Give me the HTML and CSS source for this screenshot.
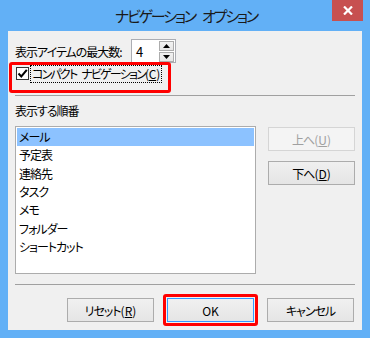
FILE: index.html
```html
<!DOCTYPE html>
<html lang="ja">
<head>
<meta charset="utf-8">
<link rel="stylesheet" href="styles.css">
</head>
<body>
<div class="window">
  <div class="titlebar">
    <span class="title">ナビゲーション オプション</span>
    <div class="close">
      <svg width="10" height="9" viewBox="0 0 10 9"><path d="M1 0.5 L9 8.5 M9 0.5 L1 8.5" stroke="#fff" stroke-width="2.2"/></svg>
    </div>
  </div>
  <div class="client">
    <div class="row-max">
      <span class="max-label">表示アイテムの最大数<span class="en">:</span></span>
      <div class="spin">
        <span class="spin-val">4</span>
        <div class="spin-btns">
          <div class="sb"><svg width="7" height="4" viewBox="0 0 7 4"><path d="M3.5 0 L7 4 L0 4Z" fill="#000"/></svg></div>
          <div class="sb"><svg width="7" height="4" viewBox="0 0 7 4"><path d="M0 0 L7 0 L3.5 4Z" fill="#000"/></svg></div>
        </div>
      </div>
    </div>
    <div class="row-check">
      <span class="chk"><svg width="11" height="11" viewBox="0 0 11 11"><path d="M1.5 5.5 L4.3 8.5 L9.8 1.8" fill="none" stroke="#000" stroke-width="2"/></svg></span>
      <span class="chk-label">コンパクト ナビゲーション<span class="en">(<u>C</u>)</span></span>
    </div>
    <div class="sep"></div>
    <div class="lbl">表示する順番</div>
    <div class="list-row">
      <div class="list">
        <div class="item sel">メール</div>
        <div class="item">予定表</div>
        <div class="item">連絡先</div>
        <div class="item">タスク</div>
        <div class="item">メモ</div>
        <div class="item">フォルダー</div>
        <div class="item">ショートカット</div>
      </div>
      <div class="side-btns">
        <div class="btn disabled">上へ<span class="en">(<u>U</u>)</span></div>
        <div class="btn">下へ<span class="en">(<u>D</u>)</span></div>
      </div>
    </div>
    <div class="sep sep2"></div>
    <div class="bottom-btns">
      <div class="btn">リセット<span class="en">(<u>R</u>)</span></div>
      <div class="btn default"><span class="en">OK</span></div>
      <div class="btn">キャンセル</div>
    </div>
  </div>
</div>
</body>
</html>
```

FILE: styles.css
```css
* { box-sizing: border-box; }
html, body { margin: 0; padding: 0; }
body {
  width: 370px;
  height: 338px;
  overflow: hidden;
  font-family: "Noto Sans CJK JP", "Noto Sans", sans-serif;
  font-feature-settings: "palt";
  font-size: 12px;
  letter-spacing: -1px;
  color: #000;
}
.en { letter-spacing: 0; }
.window {
  width: 370px;
  height: 338px;
  background: #62b0f6;
  display: flex;
  flex-direction: column;
  padding: 0 8px 8px 8px;
}
.titlebar {
  position: relative;
  height: 31px;
  display: flex;
  align-items: center;
  justify-content: center;
}
.title {
  font-size: 15px;
  letter-spacing: -2.2px;
  word-spacing: 6px;
  color: #1a1a1a;
  margin-top: -1px;
  margin-left: 2px;
}
.close {
  position: absolute;
  top: 0;
  right: -1px;
  width: 31px;
  height: 21px;
  background: #c75050;
  display: flex;
  align-items: center;
  justify-content: center;
}
.client {
  position: relative;
  flex: 1;
  background: #f0f0f0;
  padding: 8px 7px 0 7px;
}
.row-max {
  display: flex;
  align-items: center;
  height: 24px;
}
.max-label {
  width: 116px;
  flex-shrink: 0;
  white-space: nowrap;
}
.spin {
  width: 45px;
  height: 24px;
  border: 1px solid #abadb3;
  background: #fff;
  display: flex;
  align-items: center;
  justify-content: space-between;
  padding: 0 1px 0 4px;
}
.spin-val { font-size: 13px; }
.spin-btns {
  display: flex;
  flex-direction: column;
  gap: 1px;
}
.sb {
  width: 15px;
  height: 10px;
  border: 1px solid #acacac;
  background: linear-gradient(#f2f2f2, #e6e6e6);
  display: flex;
  align-items: center;
  justify-content: center;
}
.row-check {
  position: relative;
  display: flex;
  align-items: center;
  height: 21px;
}
.row-check::after {
  content: "";
  position: absolute;
  left: -6px;
  top: -1px;
  width: 156px;
  height: 25px;
  border: 3px solid #f00;
  border-radius: 3px;
}
.chk {
  width: 13px;
  height: 13px;
  border: 1px solid #333;
  background: #fff;
  display: flex;
  align-items: center;
  justify-content: center;
  margin-left: 1px;
  flex-shrink: 0;
}
.chk-label {
  margin-left: 1px;
  border: 1px dotted #000;
  padding: 0 1px;
  line-height: 16px;
  white-space: nowrap;
  letter-spacing: -1.8px;
  word-spacing: 4px;
}
.chk-label .en { letter-spacing: -0.3px; }
.sep {
  height: 1px;
  background: #a0a0a0;
  width: 340px;
  margin-top: 11px;
}
.lbl {
  margin-top: 7px;
  line-height: 16px;
}
.list-row {
  display: flex;
  margin-top: 7px;
  gap: 12px;
}
.list {
  width: 241px;
  height: 148px;
  border: 1px solid #acacac;
  background: #fff;
  padding: 1px;
}
.item {
  height: 18.33px;
  line-height: 18px;
  padding-left: 2px;
}
.item.sel { background: #8cc2ff; }
.side-btns {
  display: flex;
  flex-direction: column;
  gap: 10px;
  padding-top: 1px;
}
.btn {
  width: 87px;
  height: 24px;
  border: 1px solid #acacac;
  background: linear-gradient(#f0f0f0, #e5e5e5);
  display: flex;
  align-items: center;
  justify-content: center;
}
.btn.disabled {
  border-color: #d5d5d5;
  background: #f4f4f4;
  color: #a0a0a0;
}
.sep2 { margin-top: 10px; }
.bottom-btns {
  display: flex;
  justify-content: flex-end;
  gap: 13px;
  margin-top: 13px;
  padding-right: 1px;
}
.btn.default {
  position: relative;
  border-color: #3399ff;
}
.btn.default::after {
  content: "";
  position: absolute;
  left: -5px;
  top: -5px;
  right: -5px;
  bottom: -5px;
  border: 3px solid #f00;
  border-radius: 3px;
}
```
